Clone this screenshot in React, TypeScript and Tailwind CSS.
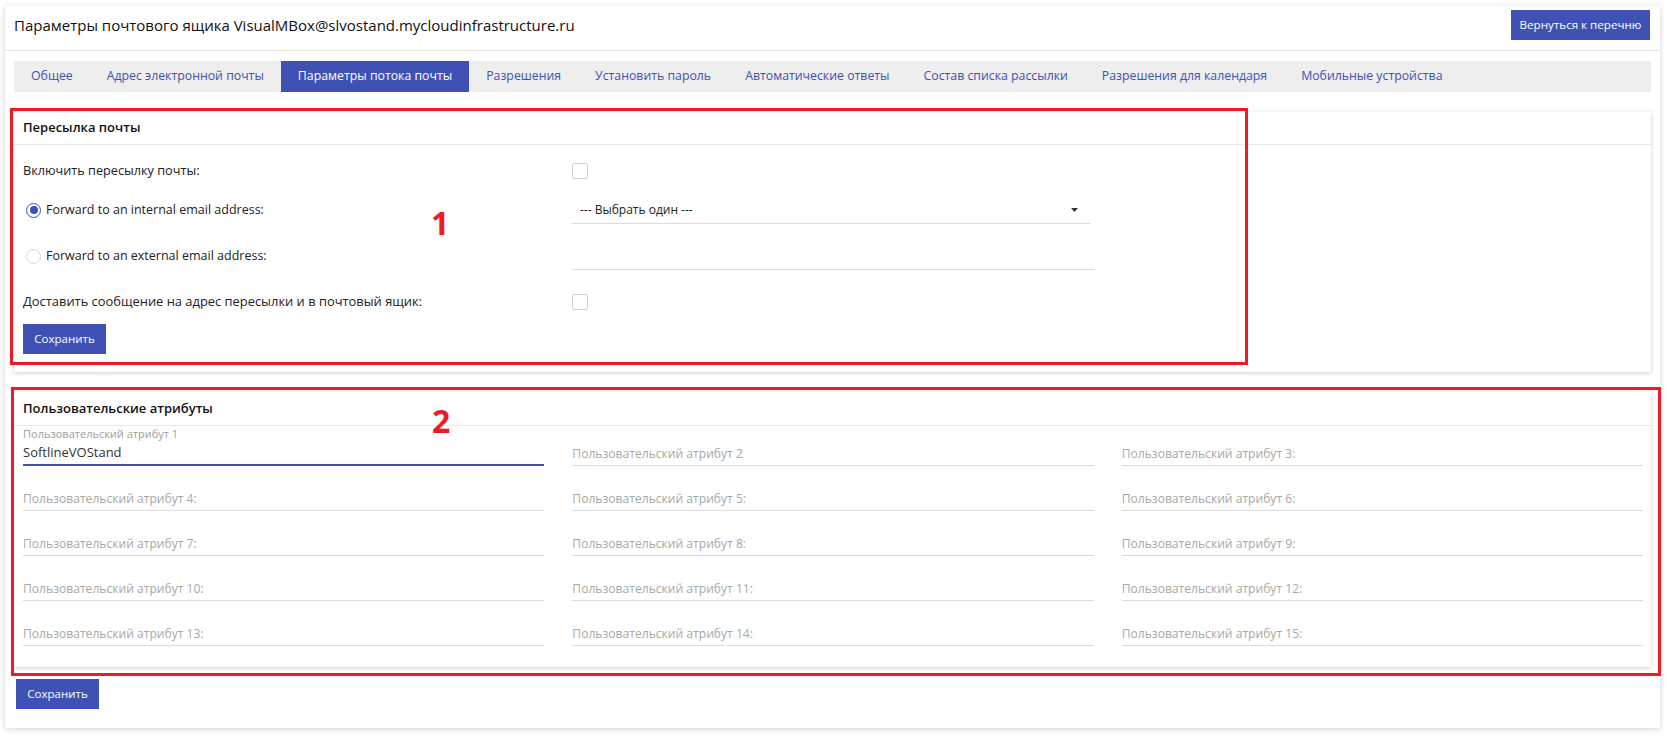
import React from "react";

const tabs = [
  "Общее",
  "Адрес электронной почты",
  "Параметры потока почты",
  "Разрешения",
  "Установить пароль",
  "Автоматические ответы",
  "Состав списка рассылки",
  "Разрешения для календаря",
  "Мобильные устройства",
];

const attrs = Array.from({ length: 15 }, (_, i) => i + 1);

function Checkbox() {
  return <span className="block size-[16px] rounded-[2px] border border-[#cfcfcf] bg-white" />;
}

function Radio({ checked }: { checked?: boolean }) {
  return checked ? (
    <span className="flex size-[15px] items-center justify-center rounded-full border-[1.5px] border-[#3f51b5]">
      <span className="size-[8px] rounded-full bg-[#3f51b5]" />
    </span>
  ) : (
    <span className="block size-[15px] rounded-full border border-[#d5d5d5]" />
  );
}

function SaveButton() {
  return (
    <button className="h-[30px] w-[83px] bg-[#3f51b5] text-[11.5px] text-white">Сохранить</button>
  );
}

export default function App() {
  return (
    <div className="relative min-h-[746px] bg-white pl-[5px] pt-[6px] font-['Open_Sans',sans-serif] text-[#222]">
      <div className="w-[1655px] bg-white pb-[19px] shadow-[0_1px_6px_rgba(0,0,0,0.18)]">
        {/* header */}
        <div className="flex h-[45px] items-start justify-between border-b border-[#e6e6e6] pl-[9px] pr-[10px] pt-[4px]">
          <h1 className="text-[15px] leading-[30px] text-[#111]">
            Параметры почтового ящика VisualMBox@slvostand.mycloudinfrastructure.ru
          </h1>
          <button className="h-[30px] w-[139px] bg-[#3f51b5] text-[11.6px] text-white">Вернуться к перечню</button>
        </div>

        {/* tabs */}
        <div className="mx-[9px] mt-[10px] flex h-[31px] bg-[#eeeeee]">
          {tabs.map((t, i) => (
            <div
              key={t}
              className={
                i === 2
                  ? "flex items-center bg-[#3f51b5] px-[17px] text-[12.3px] text-white"
                  : "flex items-center px-[17px] text-[12.3px] text-[#3f51b5]"
              }
            >
              {t}
            </div>
          ))}
        </div>

        {/* mail forwarding */}
        <section className="mx-[9px] mt-[20px] bg-white pb-[18px] shadow-[0_1px_4px_rgba(0,0,0,0.2)]">
          <div className="flex h-[33px] items-center border-b border-[#e8e8e8] px-[9px] text-[13px] font-semibold text-[#111]">
            Пересылка почты
          </div>
          <div className="px-[9px] pt-[9px] text-[13px]">
            <div className="flex h-[34px] items-center">
              <div className="w-[549px] text-[12.7px]">Включить пересылку почты:</div>
              <Checkbox />
            </div>
            <div className="flex h-[44px] items-center">
              <div className="flex w-[549px] items-center gap-[5px] pl-[3px] text-[12.5px]">
                <Radio checked />
                Forward to an internal email address:
              </div>
              <div className="flex h-[27px] w-[518px] items-center justify-between border-b border-[#dcdcdc] pl-[8px] pr-[12px] text-[12px]">
                <span>--- Выбрать один ---</span>
                <svg width="7" height="4" viewBox="0 0 7 4">
                  <path d="M0 0h7L3.5 4z" fill="#333" />
                </svg>
              </div>
            </div>
            <div className="flex h-[48px] items-center">
              <div className="flex w-[549px] items-center gap-[5px] pl-[3px] text-[12.5px]">
                <Radio />
                Forward to an external email address:
              </div>
              <div className="h-[27px] w-[523px] border-b border-[#dcdcdc]" />
            </div>
            <div className="flex h-[44px] items-center">
              <div className="w-[549px] text-[12.9px]">Доставить сообщение на адрес пересылки и в почтовый ящик:</div>
              <Checkbox />
            </div>
            <SaveButton />
          </div>
        </section>

        {/* custom attributes */}
        <section className="mx-[9px] mt-[20px] bg-white pb-[21px] shadow-[0_1px_4px_rgba(0,0,0,0.2)]">
          <div className="flex h-[34px] items-center border-b border-[#e8e8e8] px-[9px] text-[13px] font-semibold text-[#111]">
            Пользовательские атрибуты
          </div>
          <div className="grid grid-cols-3 gap-x-[28px] gap-y-[5px] pl-[9px] pr-[8px]">
            {attrs.map((n) =>
              n === 1 ? (
                <div key={n} className="flex h-[40px] flex-col border-b-2 border-[#3f51b5]">
                  <span className="text-[11px] leading-[16px] text-[#9e9e9e]">Пользовательский атрибут 1</span>
                  <span className="text-[13px] leading-[20px] text-[#333]">SoftlineVOStand</span>
                </div>
              ) : (
                <div key={n} className="flex h-[40px] flex-col justify-end border-b border-[#dcdcdc] pb-[1px]">
                  <span className="text-[12.1px] leading-[20px] text-[#a8a8a8]">
                    Пользовательский атрибут {n}
                    {n === 2 ? "" : ":"}
                  </span>
                </div>
              )
            )}
          </div>
        </section>

        <div className="ml-[11px] mt-[12px]">
          <SaveButton />
        </div>
      </div>

      {/* annotation frames */}
      <div className="pointer-events-none absolute left-[10px] top-[108px] h-[257px] w-[1238px] border-[3px] border-[#ed1c24]" />
      <div className="pointer-events-none absolute left-[11px] top-[387px] h-[289px] w-[1650px] border-[3px] border-[#ed1c24]" />
      <span className="absolute left-[431px] top-[203px] text-[32px] font-bold leading-[40px] text-[#ed1c24]">1</span>
      <span className="absolute left-[432px] top-[401px] text-[32px] font-bold leading-[40px] text-[#ed1c24]">2</span>
    </div>
  );
}
